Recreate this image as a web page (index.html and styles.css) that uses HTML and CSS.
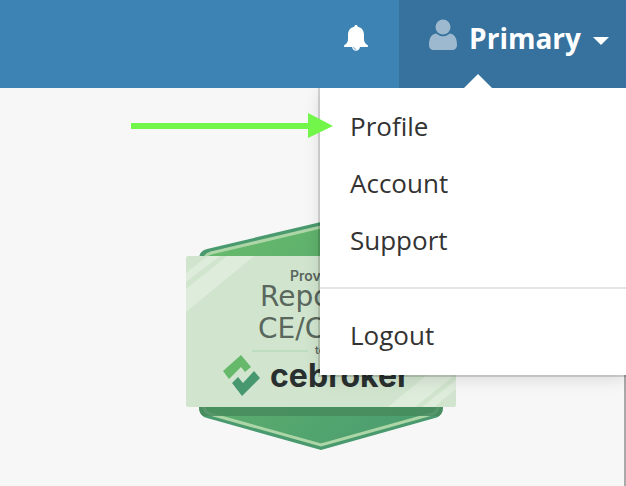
FILE: index.html
```
<!DOCTYPE html>
<html lang="en">
<head>
    <meta charset="UTF-8">
    <meta name="viewport" content="width=device-width, initial-scale=1.0">
    <title>Account menu</title>
    <link rel="stylesheet" href="styles.css">
</head>
<body>
    <header class="topbar">
        <button class="bell" type="button" aria-label="Notifications">
            <svg width="26" height="28" viewBox="0 0 26 28">
                <path fill="#fff" d="M13 1c1 0 1.700.7 1.700 1.700C18.800 3.500 21 6.700 21 11v4c0 3 1 4.500 3.800 6.300.6.6.3 1.700-.6 1.700H17c-.3 2.200-2 3.700-4 3.700S9.300 25.200 9 23H1.800c-.9 0-1.200-1.100-.6-1.700C4 19.500 5 18 5 15v-4c0-4.300 2.200-7.500 6.300-8.300C11.300 1.700 12 1 13 1z"/>
                <path fill="none" stroke="#3d84b5" stroke-width=".7" d="M10.500 23c.2 1.300 1.100 2.200 2.500 2.300"/>
            </svg>
        </button>
        <div class="user">
            <button class="user-toggle" type="button" aria-expanded="true">
                <svg width="28" height="32" viewBox="0 0 28 32">
                    <circle cx="14" cy="8" r="7.500"/>
                    <path d="M7 14.500Q14 20 21 14.500C26 15 28 20 28 26c0 3-2 5-5 5H5c-3 0-5-2-5-5 0-6 2-11 7-11.500z"/>
                </svg>
                <span>Primary</span>
                <i class="caret"></i>
            </button>
            <nav class="menu">
                <a href="#profile">Profile</a>
                <a href="#account">Account</a>
                <a href="#support">Support</a>
                <hr>
                <a href="#logout">Logout</a>
            </nav>
        </div>
    </header>

    <main class="content">
        <svg class="badge" width="270" height="230" viewBox="0 0 270 230" role="img">
            <defs>
                <linearGradient id="green" x1="0" y1="0" x2="1" y2="1">
                    <stop offset="0" stop-color="#68bb6b"/>
                    <stop offset="1" stop-color="#499a70"/>
                </linearGradient>
                <clipPath id="card"><rect y="35" width="270" height="151" rx="2"/></clipPath>
                <clipPath id="shield"><path d="M135 1L21 28Q13 30 13 38V186Q13 195 21 197L135 229L249 197Q257 195 257 186V38Q257 30 249 28z"/></clipPath>
            </defs>
            <path fill="#499a6e" d="M135 1L21 28Q13 30 13 38V186Q13 195 21 197L135 229L249 197Q257 195 257 186V38Q257 30 249 28z"/>
            <path fill="url(#green)" stroke="#add6a7" stroke-width="3" d="M135 6L25 32Q18 34 18 41V185Q18 191 24 193L135 224L246 193Q252 191 252 185V41Q252 34 245 32z"/>
            <rect class="fold" y="186" width="270" height="9" clip-path="url(#shield)"/>
            <g clip-path="url(#card)">
                <rect y="35" width="270" height="151" fill="#d1e5ce"/>
                <path fill="#deecdc" d="M0 52L22 35H34L0 61zM0 68L41 35H68L0 91zM202 186L270 130V153L229 186zM236 186L270 159V168L248 186z"/>
            </g>
            <text class="badge-small" x="104" y="60">Provider</text>
            <text class="badge-large" x="74" y="85">Reports</text>
            <text class="badge-large" x="72" y="117">CE/CME</text>
            <path stroke="#add6b1" stroke-width="1" d="M66 130H122M148 130H204"/>
            <text class="badge-tiny" x="129" y="133">to</text>
            <path fill="#66b96b" d="M37 150L55 134L65 146L59 151L55 146L43 158z"/>
            <path fill="#47986f" d="M46 162L52 156L57 162L68 150L74 157L56 175z"/>
            <text class="badge-logo" x="84" y="166">ce</text>
            <text class="badge-logo" x="122" y="166">broker</text>
        </svg>
        <svg class="arrow" width="204" height="26" viewBox="0 0 204 26">
            <path fill="#72f649" d="M0 10H177V0L202 13L177 25V16H0z"/>
        </svg>
    </main>
</body>
</html>
```
FILE: styles.css
```
* {
    box-sizing: border-box;
}

body {
    margin: 0;
    min-height: 100vh;
    display: flex;
    flex-direction: column;
    background: #f7f7f7;
    color: #333;
    font-family: "Open Sans", "Noto Sans", sans-serif;
}

button {
    border: 0;
    padding: 0;
    background: none;
    font: inherit;
    cursor: pointer;
}

.topbar {
    display: flex;
    justify-content: flex-end;
    height: 88px;
    background: #3d84b5;
}

.bell {
    display: flex;
    align-items: center;
    padding: 0 30px 12px;
}

.user {
    position: relative;
    background: #36729d;
}

.user-toggle {
    position: relative;
    display: flex;
    align-items: center;
    gap: 12px;
    height: 100%;
    padding: 0 17px 12px 30px;
    color: #fff;
    font-size: 28px;
    font-weight: 700;
}

.user-toggle svg {
    fill: #9cb9d0;
    margin-bottom: 6px;
}

/* pointer of the open menu */
.user-toggle::after {
    content: "";
    position: absolute;
    bottom: 0;
    left: 65px;
    border: 14px solid transparent;
    border-top: 0;
    border-bottom-color: #fff;
}

.caret {
    border: 8px solid transparent;
    border-top-color: #fff;
    border-bottom: 0;
    margin-top: 6px;
}

.menu {
    position: absolute;
    z-index: 1;
    top: 100%;
    right: 0;
    width: 306px;
    padding: 10px 0 11px;
    background: #fff;
    box-shadow: 0 0 0 2px rgba(0, 0, 0, 0.14), 0 4px 16px rgba(0, 0, 0, 0.12);
    clip-path: inset(0 0 -24px -24px);
}

.menu a {
    display: block;
    padding: 0 30px;
    color: #333;
    font-size: 26px;
    line-height: 57px;
    text-decoration: none;
}

.menu hr {
    margin: 18px 0;
    border: 0;
    border-top: 2px solid #e5e5e5;
}

.content {
    position: relative;
    flex: 1;
    display: flex;
    justify-content: center;
    padding: 133px 0 32px 18px;
    border-right: 2px solid #aaa;
}

.badge {
    flex: none;
    font-family: Inter, "Liberation Sans", sans-serif;
    fill: #59675d;
}

.fold {
    fill: #468b5d;
    fill-opacity: 0.85;
}

.badge-small {
    font-size: 14px;
    font-weight: 600;
}

.badge-large {
    font-family: "DejaVu Sans", sans-serif;
    font-size: 28px;
    font-weight: 400;
}

.badge-tiny {
    font-size: 11px;
    font-weight: 600;
}

.badge-logo {
    font-size: 32px;
    font-weight: 700;
    fill: #29302f;
}

/* callout arrow over the page and the menu */
.arrow {
    position: absolute;
    z-index: 2;
    top: 25px;
    left: 131px;
}
```
